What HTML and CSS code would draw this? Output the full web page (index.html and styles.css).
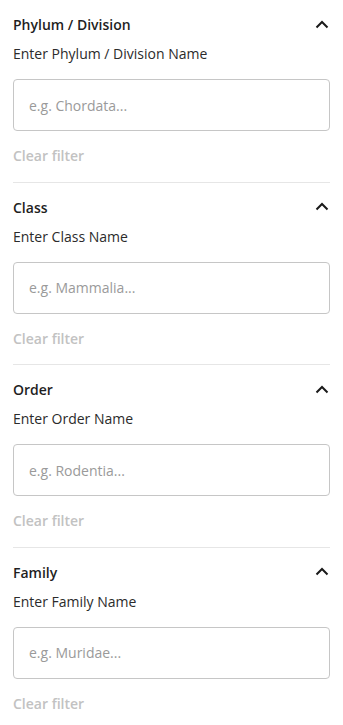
FILE: index.html
```html
<!DOCTYPE html>
<html>
<head>
<meta charset="utf-8">
<link rel="stylesheet" href="styles.css">
</head>
<body>
<div class="filters">
  <section class="filter">
    <div class="filter-head">
      <span class="filter-title">Phylum / Division</span>
      <svg class="chev" width="14" height="9" viewBox="0 0 14 9"><polyline points="1.5,7.5 7,2 12.5,7.5" fill="none" stroke="#1a1a1a" stroke-width="2"/></svg>
    </div>
    <label class="filter-label">Enter Phylum / Division Name</label>
    <input class="filter-input" type="text" placeholder="e.g. Chordata...">
    <span class="clear">Clear filter</span>
  </section>
  <section class="filter">
    <div class="filter-head">
      <span class="filter-title">Class</span>
      <svg class="chev" width="14" height="9" viewBox="0 0 14 9"><polyline points="1.5,7.5 7,2 12.5,7.5" fill="none" stroke="#1a1a1a" stroke-width="2"/></svg>
    </div>
    <label class="filter-label">Enter Class Name</label>
    <input class="filter-input" type="text" placeholder="e.g. Mammalia...">
    <span class="clear">Clear filter</span>
  </section>
  <section class="filter">
    <div class="filter-head">
      <span class="filter-title">Order</span>
      <svg class="chev" width="14" height="9" viewBox="0 0 14 9"><polyline points="1.5,7.5 7,2 12.5,7.5" fill="none" stroke="#1a1a1a" stroke-width="2"/></svg>
    </div>
    <label class="filter-label">Enter Order Name</label>
    <input class="filter-input" type="text" placeholder="e.g. Rodentia...">
    <span class="clear">Clear filter</span>
  </section>
  <section class="filter">
    <div class="filter-head">
      <span class="filter-title">Family</span>
      <svg class="chev" width="14" height="9" viewBox="0 0 14 9"><polyline points="1.5,7.5 7,2 12.5,7.5" fill="none" stroke="#1a1a1a" stroke-width="2"/></svg>
    </div>
    <label class="filter-label">Enter Family Name</label>
    <input class="filter-input" type="text" placeholder="e.g. Muridae...">
    <span class="clear">Clear filter</span>
  </section>
</div>
</body>
</html>
```
FILE: styles.css
```css
* { box-sizing: border-box; }
html, body {
  margin: 0;
  padding: 0;
  background: #fff;
}
body {
  font-family: "Open Sans", "Noto Sans", sans-serif;
  font-size: 14px;
  line-height: 20px;
  color: #222;
}
.filters {
  padding: 0 13px;
}
.filter {
  display: flex;
  flex-direction: column;
  padding: 15px 0 15.5px;
  border-bottom: 1px solid #e6e6e6;
}
.filter:last-child {
  border-bottom: none;
}
.filter-head {
  display: flex;
  align-items: center;
  justify-content: space-between;
  height: 20px;
}
.filter-title {
  font-weight: 600;
  color: #1f1f1f;
}
.chev {
  display: block;
  margin-right: 1px;
  margin-top: -2px;
}
.filter-label {
  margin-top: 9px;
  color: #2b2b2b;
}
.filter-input {
  margin-top: 15px;
  height: 52px;
  width: 100%;
  border: 1px solid #c6c6c6;
  border-radius: 4px;
  padding: 0 15px;
  font-family: inherit;
  font-size: 14px;
  color: #222;
  outline: none;
  background: #fff;
}
.filter-input::placeholder {
  color: #9a9a9a;
}
.clear {
  margin-top: 15px;
  font-weight: 600;
  color: #c2c2c2;
}
```
